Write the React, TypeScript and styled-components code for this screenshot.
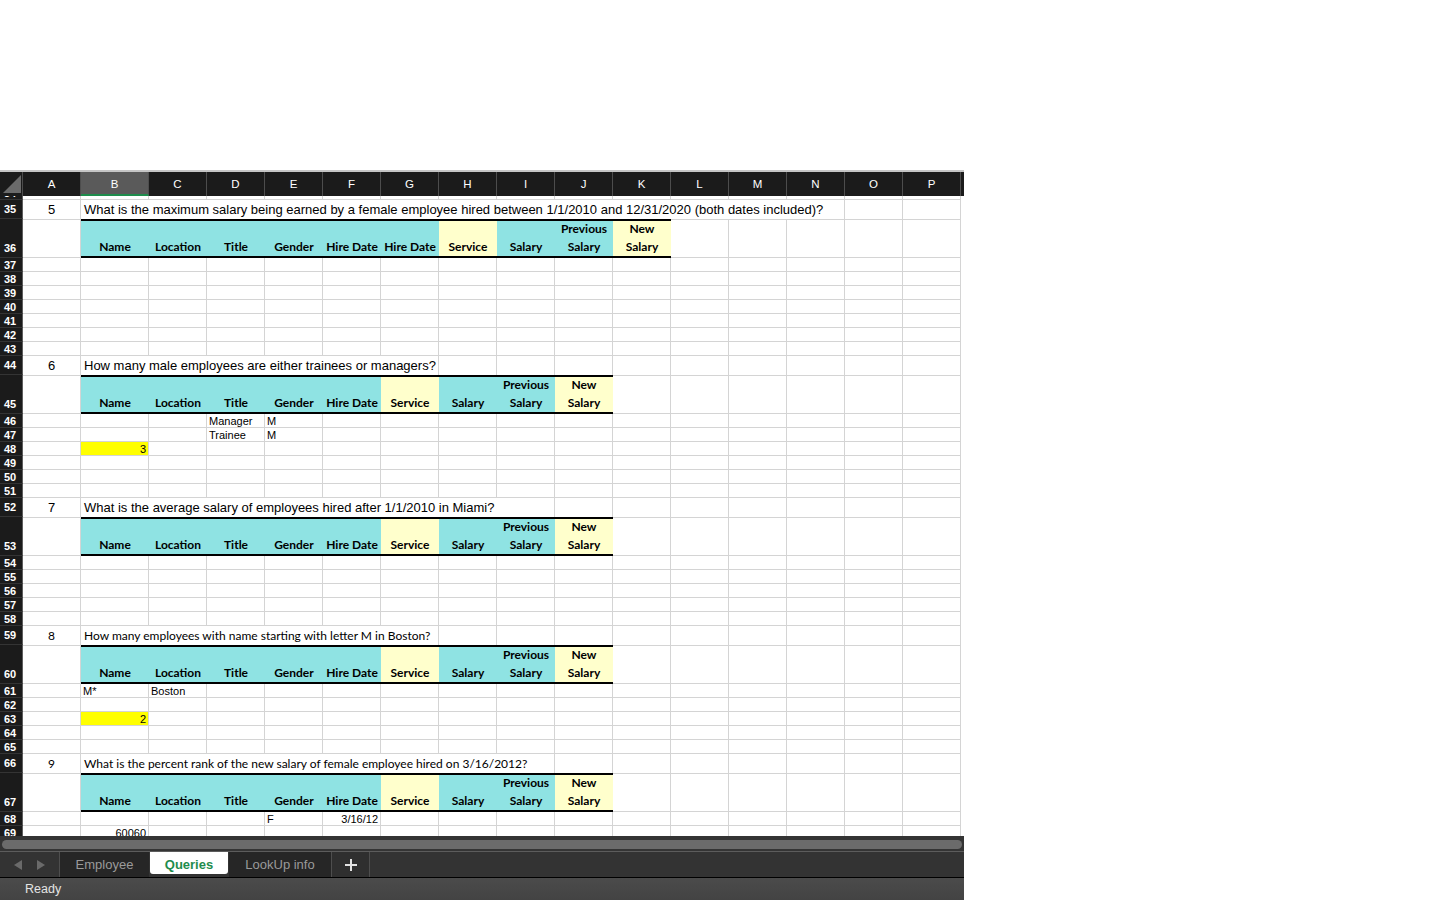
import React from "react";
import styled, { createGlobalStyle, css } from "styled-components";

const GRID_LINE = "#d4d4d4";
const CYAN = "#8fe3e3";
const PALE = "#ffffcc";
const HIGHLIGHT = "#ffff00";
const COLS = "23px 58px 68px repeat(14, 58px)";
const LETTERS = "ABCDEFGHIJKLMNOP".split("");

type Face = "arial" | "calibri";
type Entry = { text: string; right?: boolean; fill?: boolean };
type Header = { label: string[]; pale?: boolean };
type Section = {
  num: string;
  question: string;
  face: Face;
  span: number;
  headers: Header[];
  rows: Record<string, Entry>[];
};

const faceCss = (face: Face) =>
  face === "arial"
    ? css`
        font-family: "Liberation Sans", Arial, sans-serif;
        font-size: 13px;
      `
    : css`
        font-family: Lato, "Open Sans", sans-serif;
        font-size: 12px;
      `;

const GlobalStyle = createGlobalStyle`
  html, body {
    margin: 0;
    padding: 0;
    background: #fff;
  }
  body {
    font-family: "Liberation Sans", Arial, sans-serif;
  }
`;

const Page = styled.div`
  padding-top: 170px;
`;

const Workbook = styled.div`
  width: 964px;
  height: 730px;
  display: flex;
  flex-direction: column;
  background: #fff;
`;

const ColumnBar = styled.div`
  display: grid;
  grid-template-columns: ${COLS};
  grid-template-rows: 100%;
  height: 26px;
  box-sizing: border-box;
  border-top: 2px solid #c5c5c5;
  background: #1b1b1b;
`;

const Corner = styled.div`
  display: flex;
  align-items: flex-end;
  justify-content: flex-end;
  padding: 0 1px 3px 0;
  border-right: 1px solid #4d4d4d;
`;

const Letter = styled.div<{ $active?: boolean }>`
  display: flex;
  align-items: center;
  justify-content: center;
  box-sizing: border-box;
  border-right: 1px solid #4d4d4d;
  color: #fff;
  font-size: 11.5px;
  ${({ $active }) =>
    $active &&
    css`
      background: #5a5a5a;
      border-bottom: 2px solid #1e8c4c;
      padding-top: 2px;
    `}
`;

const Viewport = styled.div`
  height: 640px;
  overflow: hidden;
`;

const SheetRow = styled.div<{ $h: number }>`
  display: grid;
  grid-template-columns: ${COLS};
  grid-template-rows: 100%;
  height: ${({ $h }) => $h}px;
`;

const RowNum = styled.div<{ $tall?: boolean }>`
  box-sizing: border-box;
  display: flex;
  align-items: flex-end;
  padding: 0 0 ${({ $tall }) => ($tall ? 3 : 0)}px 4px;
  overflow: hidden;
  background: #1b1b1b;
  border-right: 1px solid #5e5e5e;
  border-bottom: 1px solid #343434;
  color: #fff;
  font-size: 11px;
  font-weight: 700;
  line-height: 11px;
`;

const Cell = styled.div<{
  $span?: number;
  $open?: boolean;
  $fill?: boolean;
  $right?: boolean;
}>`
  grid-column: span ${({ $span }) => $span ?? 1};
  box-sizing: border-box;
  display: flex;
  align-items: flex-end;
  justify-content: ${({ $right }) => ($right ? "flex-end" : "flex-start")};
  padding: 0 2px;
  overflow: hidden;
  white-space: nowrap;
  background: ${({ $fill }) => ($fill ? HIGHLIGHT : "#fff")};
  border-right: 1px solid ${GRID_LINE};
  border-bottom: ${({ $open }) => ($open ? "none" : `1px solid ${GRID_LINE}`)};
  color: #000;
  font-size: 11px;
  line-height: 11px;
`;

const NumCell = styled(Cell)<{ $face: Face }>`
  align-items: center;
  justify-content: center;
  line-height: 15px;
  ${({ $face }) => faceCss($face)}
`;

const QuestionCell = styled(Cell)<{ $face: Face }>`
  align-items: center;
  padding: 0 0 0 3px;
  overflow: visible;
  line-height: 15px;
  ${({ $face }) => faceCss($face)}
`;

const HeaderCell = styled.div<{ $tone?: "cyan" | "pale" }>`
  box-sizing: border-box;
  display: flex;
  flex-direction: column;
  justify-content: flex-end;
  align-items: center;
  background: ${({ $tone }) =>
    $tone === "cyan" ? CYAN : $tone === "pale" ? PALE : "#fff"};
  border-top: ${({ $tone }) =>
    $tone ? "2px solid #000" : `1px solid ${GRID_LINE}`};
  border-bottom: ${({ $tone }) =>
    $tone ? "2px solid #000" : `1px solid ${GRID_LINE}`};
  border-right: ${({ $tone }) => ($tone ? "none" : `1px solid ${GRID_LINE}`)};
  font-family: Lato, "Open Sans", sans-serif;
  font-weight: 700;
  font-size: 12px;
  line-height: 18px;
  color: #000;
  white-space: nowrap;
`;

const Chrome = styled.div`
  display: flex;
  flex-direction: column;
`;

const ScrollArea = styled.div`
  height: 15px;
  box-sizing: border-box;
  padding: 4px 2px 2px 2px;
  background: #343434;
`;

const Thumb = styled.div`
  height: 9px;
  border-radius: 5px;
  background: #6b6b6b;
`;

const TabBar = styled.div`
  height: 27px;
  box-sizing: border-box;
  display: flex;
  background: #333;
  border-top: 1px solid #5c5c5c;
  border-bottom: 1px solid #000;
`;

const Arrows = styled.div`
  width: 60px;
  box-sizing: border-box;
  display: flex;
  align-items: center;
  gap: 15px;
  padding-left: 14px;
  border-right: 1px solid #4e4e4e;
`;

const Tab = styled.div<{ $active?: boolean; $w: number; $edge?: boolean }>`
  width: ${({ $w }) => $w}px;
  box-sizing: border-box;
  display: flex;
  align-items: center;
  justify-content: center;
  font-size: 13px;
  background: #262626;
  color: #9a9a9a;
  border-right: ${({ $edge }) => ($edge ? "1px solid #4e4e4e" : "none")};
  ${({ $active }) =>
    $active &&
    css`
      background: #fff;
      color: #1e8c4c;
      font-weight: 700;
      margin: 0 1px 3px 1px;
      padding-top: 3px;
      border-radius: 0 0 3px 3px;
    `}
`;

const AddTab = styled.div`
  width: 38px;
  box-sizing: border-box;
  display: flex;
  align-items: center;
  justify-content: center;
  background: #2f2f2f;
  border-right: 1px solid #4e4e4e;
`;

const StatusBar = styled.div`
  height: 22px;
  display: flex;
  align-items: center;
  padding-left: 25px;
  background: linear-gradient(#4b4b4b, #434343);
  color: #e4e4e4;
  font-size: 12.5px;
`;

const BASE_HEADERS: Header[] = [
  { label: ["Name"] },
  { label: ["Location"] },
  { label: ["Title"] },
  { label: ["Gender"] },
  { label: ["Hire Date"] },
  { label: ["Service"], pale: true },
  { label: ["Salary"] },
  { label: ["Previous", "Salary"] },
  { label: ["New", "Salary"], pale: true },
];

const blank = (n: number) => Array.from({ length: n }, () => ({}));

const SECTIONS: Section[] = [
  {
    num: "5",
    question:
      "What is the maximum salary being earned by a female employee hired between 1/1/2010 and 12/31/2020 (both dates included)?",
    face: "arial",
    span: 13,
    headers: [...BASE_HEADERS.slice(0, 5), { label: ["Hire Date"] }, ...BASE_HEADERS.slice(5)],
    rows: blank(7),
  },
  {
    num: "6",
    question: "How many male employees are either trainees or managers?",
    face: "arial",
    span: 6,
    headers: BASE_HEADERS,
    rows: [
      { D: { text: "Manager" }, E: { text: "M" } },
      { D: { text: "Trainee" }, E: { text: "M" } },
      { B: { text: "3", right: true, fill: true } },
      ...blank(3),
    ],
  },
  {
    num: "7",
    question: "What is the average salary of employees hired after 1/1/2010 in Miami?",
    face: "arial",
    span: 8,
    headers: BASE_HEADERS,
    rows: blank(5),
  },
  {
    num: "8",
    question: "How many employees with name starting with letter M in Boston?",
    face: "calibri",
    span: 6,
    headers: BASE_HEADERS,
    rows: [
      { B: { text: "M*" }, C: { text: "Boston" } },
      {},
      { B: { text: "2", right: true, fill: true } },
      ...blank(2),
    ],
  },
  {
    num: "9",
    question: "What is the percent rank of the new salary of female employee hired on 3/16/2012?",
    face: "calibri",
    span: 8,
    headers: BASE_HEADERS,
    rows: [
      { E: { text: "F" }, F: { text: "3/16/12", right: true } },
      { B: { text: "60060", right: true } },
    ],
  },
];

function QuestionRow({ n, s }: { n: number; s: Section }) {
  const rest = LETTERS.length - 1 - s.span;
  return (
    <SheetRow $h={19}>
      <RowNum $tall>{n}</RowNum>
      <NumCell $open $face={s.face}>
        {s.num}
      </NumCell>
      <QuestionCell $open $span={s.span} $face={s.face}>
        {s.question}
      </QuestionCell>
      {Array.from({ length: rest }, (_, i) => (
        <Cell key={i} $open />
      ))}
    </SheetRow>
  );
}

function HeaderRow({ n, s }: { n: number; s: Section }) {
  const rest = LETTERS.length - 1 - s.headers.length;
  return (
    <SheetRow $h={39}>
      <RowNum $tall>{n}</RowNum>
      <HeaderCell />
      {s.headers.map((h, i) => (
        <HeaderCell key={i} $tone={h.pale ? "pale" : "cyan"}>
          {h.label.map((line) => (
            <span key={line}>{line}</span>
          ))}
        </HeaderCell>
      ))}
      {Array.from({ length: rest }, (_, i) => (
        <HeaderCell key={`e${i}`} />
      ))}
    </SheetRow>
  );
}

function DataRow({ n, data }: { n: number; data: Record<string, Entry> }) {
  return (
    <SheetRow $h={14}>
      <RowNum>{n}</RowNum>
      {LETTERS.map((l) => {
        const e = data[l];
        return (
          <Cell key={l} $fill={e?.fill} $right={e?.right}>
            {e?.text}
          </Cell>
        );
      })}
    </SheetRow>
  );
}

function Sheet() {
  let n = 35;
  const rows: React.ReactNode[] = [];
  SECTIONS.forEach((s) => {
    rows.push(<QuestionRow key={n} n={n++} s={s} />);
    rows.push(<HeaderRow key={n} n={n++} s={s} />);
    s.rows.forEach((d) => {
      rows.push(<DataRow key={n} n={n++} data={d} />);
    });
  });
  return (
    <Viewport>
      <SheetRow $h={4}>
        <RowNum>34</RowNum>
        {LETTERS.map((l) => (
          <Cell key={l} />
        ))}
      </SheetRow>
      {rows}
    </Viewport>
  );
}

export default function App() {
  return (
    <Page>
      <GlobalStyle />
      <Workbook>
        <ColumnBar>
          <Corner>
            <svg width="18" height="18" viewBox="0 0 18 18">
              <polygon points="0,18 18,0 18,18" fill="#6b6b6b" />
            </svg>
          </Corner>
          {LETTERS.map((l) => (
            <Letter key={l} $active={l === "B"}>
              {l}
            </Letter>
          ))}
        </ColumnBar>
        <Sheet />
        <Chrome>
          <ScrollArea>
            <Thumb />
          </ScrollArea>
          <TabBar>
            <Arrows>
              <svg width="8" height="10" viewBox="0 0 8 10">
                <polygon points="8,0 0,5 8,10" fill="#6a6a6a" />
              </svg>
              <svg width="8" height="10" viewBox="0 0 8 10">
                <polygon points="0,0 8,5 0,10" fill="#6a6a6a" />
              </svg>
            </Arrows>
            <Tab $w={89}>Employee</Tab>
            <Tab $w={78} $active>
              Queries
            </Tab>
            <Tab $w={103} $edge>
              LookUp info
            </Tab>
            <AddTab>
              <svg width="12" height="12" viewBox="0 0 12 12">
                <path d="M6 0v12M0 6h12" stroke="#e2e2e2" strokeWidth="2" />
              </svg>
            </AddTab>
          </TabBar>
          <StatusBar>Ready</StatusBar>
        </Chrome>
      </Workbook>
    </Page>
  );
}
